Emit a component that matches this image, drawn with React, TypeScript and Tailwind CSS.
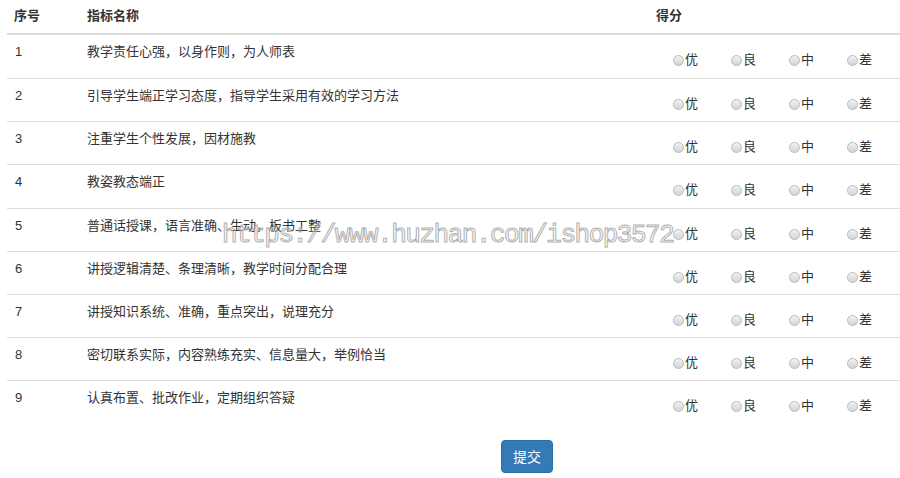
import React, { useState } from "react";

const items = [
  "教学责任心强，以身作则，为人师表",
  "引导学生端正学习态度，指导学生采用有效的学习方法",
  "注重学生个性发展，因材施教",
  "教姿教态端正",
  "普通话授课，语言准确、生动，板书工整",
  "讲授逻辑清楚、条理清晰，教学时间分配合理",
  "讲授知识系统、准确，重点突出，说理充分",
  "密切联系实际，内容熟练充实、信息量大，举例恰当",
  "认真布置、批改作业，定期组织答疑",
];

const grades = ["优", "良", "中", "差"];

function Radio({ checked }: { checked: boolean }) {
  return (
    <span
      className={
        "inline-block w-[11px] h-[11px] rounded-full border border-[#b9b9b9] " +
        (checked
          ? "bg-[radial-gradient(circle,#2a6fb5_0_2px,#e9e9e9_3px)]"
          : "bg-[linear-gradient(#f2f2f2,#d4d4d4)]")
      }
    />
  );
}

export default function App() {
  const [scores, setScores] = useState<Record<number, string>>({});

  return (
    <div
      className="relative w-[900px] h-[478px] bg-white text-[#333] text-[13px] leading-[20px]"
      style={{ fontFamily: '"Liberation Sans", "Noto Sans CJK SC", sans-serif' }}
    >
      <div className="pl-[7px]">
        <div className="flex h-[35px] border-b-2 border-[#ddd] font-bold items-center pb-[2px]">
          <div className="w-[72px] pl-[7px]">序号</div>
          <div className="w-[569px] pl-[8px]">指标名称</div>
          <div className="flex-1 pl-[8px]">得分</div>
        </div>
        {items.map((text, i) => (
          <div
            key={i}
            className={
              "flex " +
              (i === 3 ? "h-[44px] " : "h-[43px] ") +
              (i > 0 ? "border-t border-[#ddd]" : "")
            }
          >
            <div className="w-[72px] pl-[8px] pt-[7px]">{i + 1}</div>
            <div className="w-[569px] pl-[8px] pt-[7px]">{text}</div>
            <div className="flex-1 flex gap-[33px] pl-[25px] pt-[15px]">
              {grades.map((g) => (
                <label
                  key={g}
                  className="flex items-center h-[20px] cursor-pointer"
                  onClick={() => setScores((s) => ({ ...s, [i]: g }))}
                >
                  <Radio checked={scores[i] === g} />
                  <span className="ml-px">{g}</span>
                </label>
              ))}
            </div>
          </div>
        ))}
      </div>

      <div className="pt-[17px] pl-[501px]">
        <button className="w-[52px] h-[33px] rounded-[4px] bg-[#337ab7] border border-[#2e6da4] text-white text-[14px]">
          提交
        </button>
      </div>

      {/* watermark */}
      <div
        className="absolute left-[222px] top-[220px] text-[26px] leading-[30px] tracking-[-1.5px] text-transparent whitespace-nowrap pointer-events-none [-webkit-text-stroke:1px_#b0b0b0]"
        style={{ fontFamily: '"Liberation Mono", monospace' }}
      >
        https://www.huzhan.com/ishop3572
      </div>
    </div>
  );
}
